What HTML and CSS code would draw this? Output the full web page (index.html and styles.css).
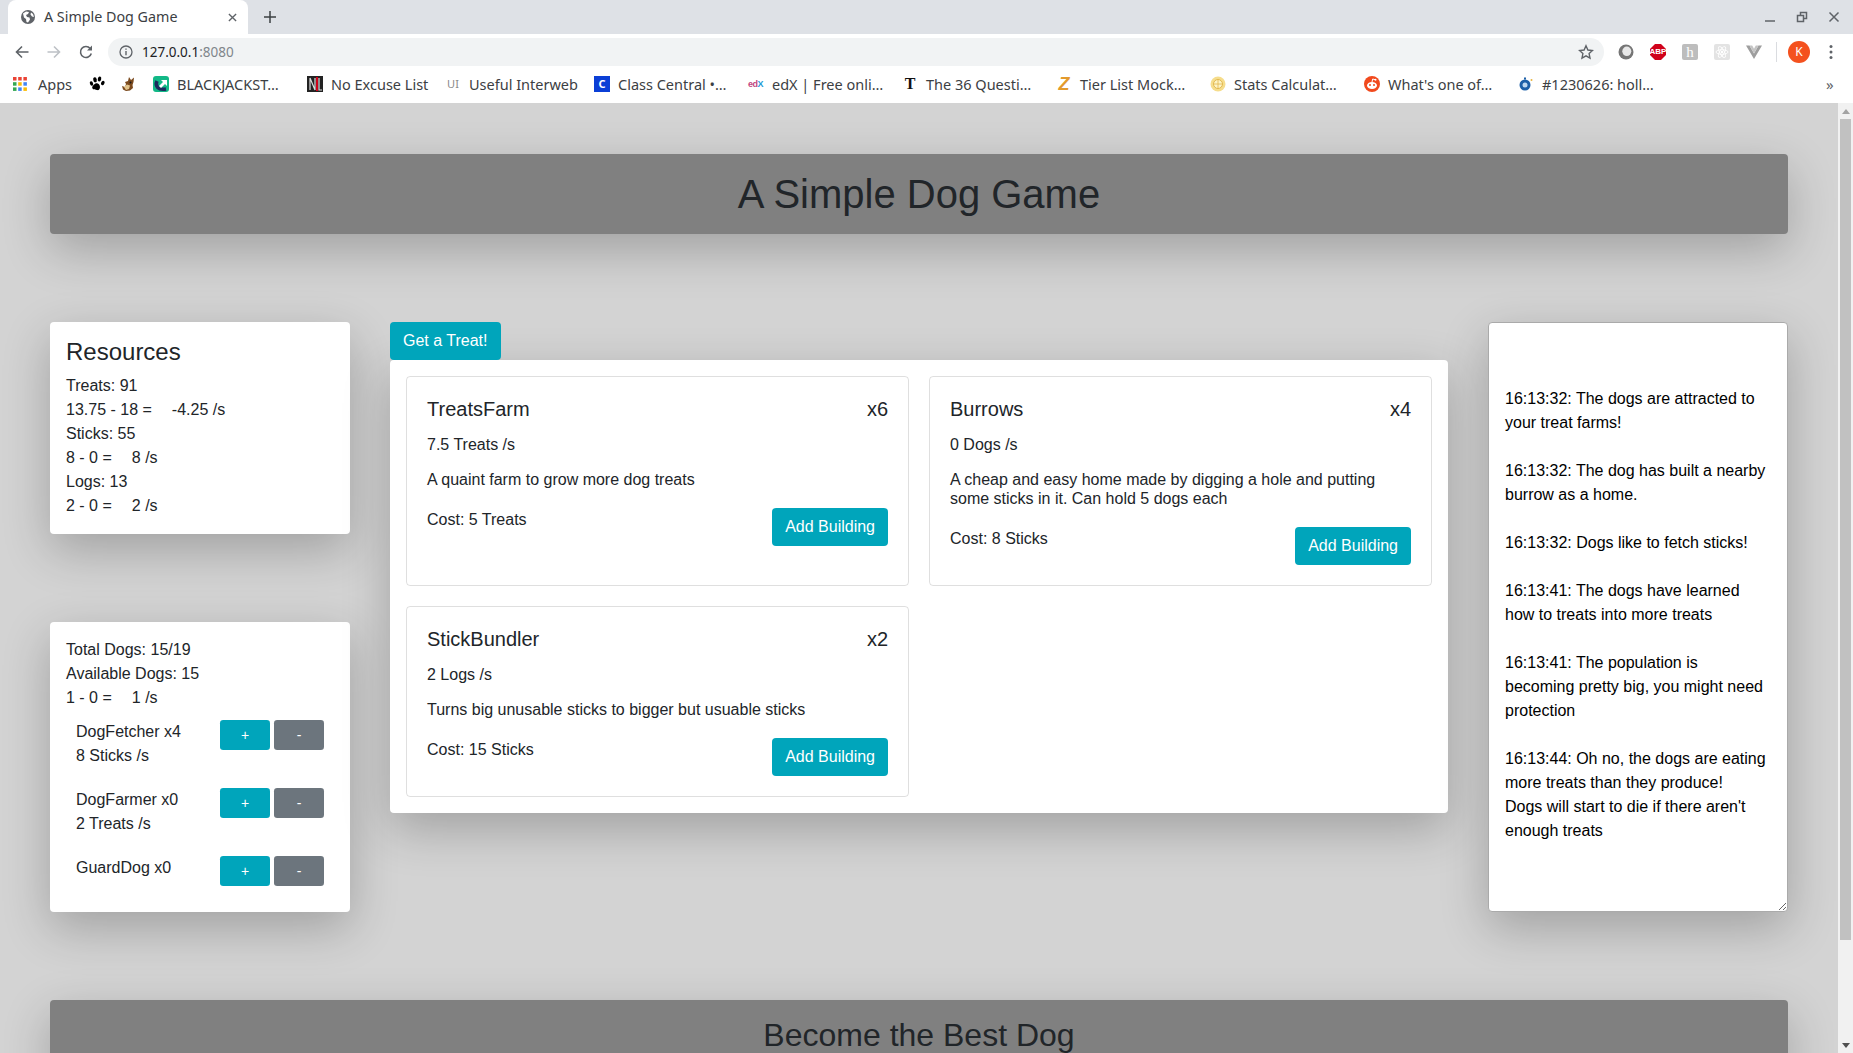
FILE: index.html

```html
<!DOCTYPE html>
<html lang="en">
<head>
    <meta charset="UTF-8">
    <title>A Simple Dog Game</title>
    <link rel="stylesheet" href="styles.css">
</head>
<body>
    <div class="tabstrip">
        <div class="tab">
            <svg class="icon16" viewBox="0 0 16 16"><circle cx="8" cy="8" r="7" fill="#5f6368"/><path d="M3 4.500l3-2 3 .5-1 2-2 1 1 2 2.500 .5 .5 2-2 3-1.500-.5-.5-3-2-1.500z M11 3.500l2 1.500 1 3-2-.5-1.500-2z" fill="#fff"/></svg>
            <span class="tab-title">A Simple Dog Game</span>
            <svg class="tab-close" viewBox="0 0 10 10"><path d="M1 1l8 8M9 1l-8 8" stroke="#5f6368" stroke-width="1.500"/></svg>
        </div>
        <svg class="new-tab" viewBox="0 0 12 12"><path d="M6 0v12M0 6h12" stroke="#3c4043" stroke-width="1.500"/></svg>
        <div class="window-btns">
            <svg class="icon16" viewBox="0 0 16 16"><path d="M3 12h10" stroke="#5f6368" stroke-width="1.500"/></svg>
            <svg class="icon16" viewBox="0 0 16 16"><path d="M3.500 6.500h6v6h-6z M6.500 6V3.500h6v6H10" fill="none" stroke="#5f6368" stroke-width="1.500"/></svg>
            <svg class="icon16" viewBox="0 0 16 16"><path d="M3.500 3.500l9 9M12.500 3.500l-9 9" stroke="#5f6368" stroke-width="1.500"/></svg>
        </div>
    </div>

    <div class="toolbar">
        <div class="nav-btn"><svg class="icon16" viewBox="0 0 16 16"><path d="M14.500 8H2.500M8 2.500L2.500 8 8 13.500" fill="none" stroke="#5f6368" stroke-width="1.600"/></svg></div>
        <div class="nav-btn"><svg class="icon16" viewBox="0 0 16 16"><path d="M1.500 8h12M8 2.500L13.500 8 8 13.500" fill="none" stroke="#bdc1c6" stroke-width="1.600"/></svg></div>
        <div class="nav-btn"><svg class="icon16" viewBox="0 0 16 16"><path d="M13.300 9.500A5.500 5.500 0 1 1 12.200 4.400" fill="none" stroke="#5f6368" stroke-width="1.600"/><path d="M14 1.500v5h-5z" fill="#5f6368"/></svg></div>
        <div class="omnibox">
            <svg class="icon14" viewBox="0 0 14 14"><circle cx="7" cy="7" r="6" fill="none" stroke="#5f6368" stroke-width="1.300"/><path d="M7 6v4.200M7 3.500v1.300" stroke="#5f6368" stroke-width="1.400"/></svg>
            <span class="url">127.0.0.1<span class="url-port">:8080</span></span>
            <svg class="star" viewBox="0 0 16 16"><path d="M8 1.800l1.900 4.200 4.600.5-3.400 3.100.9 4.500L8 11.800l-4 2.300.9-4.500L1.500 6.500l4.600-.5z" fill="none" stroke="#5f6368" stroke-width="1.400"/></svg>
        </div>
        <div class="nav-btn"><svg class="icon16" viewBox="0 0 16 16"><circle cx="8" cy="8" r="7.500" fill="#757575"/><ellipse cx="8.800" cy="7.300" rx="4.500" ry="4.800" fill="#e8e8e8"/></svg></div>
        <div class="nav-btn"><svg class="icon16" viewBox="0 0 16 16"><path d="M5 0h6l5 5v6l-5 5H5l-5-5V5z" fill="#d0021b"/></svg><span class="abp">ABP</span></div>
        <div class="nav-btn"><div class="ext-square"><span class="ext-h">h</span></div></div>
        <div class="nav-btn"><div class="ext-square ext-light"><svg class="icon14" viewBox="0 0 14 14"><g fill="none" stroke="#fff" stroke-width=".9"><ellipse cx="7" cy="7" rx="6" ry="2.300"/><ellipse cx="7" cy="7" rx="6" ry="2.300" transform="rotate(60 7 7)"/><ellipse cx="7" cy="7" rx="6" ry="2.300" transform="rotate(120 7 7)"/></g><circle cx="7" cy="7" r="1.200" fill="#fff"/></svg></div></div>
        <div class="nav-btn"><svg class="icon16" viewBox="0 0 16 16"><path d="M0 1.500h3.500L8 9.500l4.500-8H16L8 15z" fill="#9e9e9e"/><path d="M3.500 1.500h2.700L8 4.800l1.800-3.300h2.700L8 9.500z" fill="#c4c4c4"/></svg></div>
        <div class="toolbar-sep"></div>
        <div class="avatar">K</div>
        <svg class="dots" viewBox="0 0 4 16"><circle cx="2" cy="2.500" r="1.500" fill="#5f6368"/><circle cx="2" cy="8" r="1.500" fill="#5f6368"/><circle cx="2" cy="13.500" r="1.500" fill="#5f6368"/></svg>
    </div>

    <div class="bookmarks">
        <div class="bm bm-apps">
            <svg class="icon16" viewBox="0 0 16 16">
                <rect x="1" y="1" width="3.500" height="3.500" fill="#ea4335"/><rect x="6.200" y="1" width="3.500" height="3.500" fill="#ea4335"/><rect x="11.400" y="1" width="3.500" height="3.500" fill="#ea4335"/>
                <rect x="1" y="6.200" width="3.500" height="3.500" fill="#34a853"/><rect x="6.200" y="6.200" width="3.500" height="3.500" fill="#fbbc05"/><rect x="11.400" y="6.200" width="3.500" height="3.500" fill="#4285f4"/>
                <rect x="1" y="11.400" width="3.500" height="3.500" fill="#34a853"/><rect x="6.200" y="11.400" width="3.500" height="3.500" fill="#4285f4"/><rect x="11.400" y="11.400" width="3.500" height="3.500" fill="#fbbc05"/>
            </svg>
            <span>Apps</span>
        </div>
        <div class="bm bm-icon"><svg class="icon16" viewBox="0 0 16 16"><path d="M6.500 7.500c2-1 4.500 1 4.500 3.500 0 2.500-1.500 3.500-3 3-1.500-.5-3.500 0-4.500-1.500-1-1.500 1-4 3-5z"/><ellipse cx="2.500" cy="7.500" rx="1.600" ry="2.300" transform="rotate(-20 2.500 7.500)"/><ellipse cx="6" cy="3.800" rx="1.800" ry="2.600" transform="rotate(-10 6 3.800)"/><ellipse cx="10.500" cy="3" rx="1.700" ry="2.500" transform="rotate(15 10.500 3)"/><ellipse cx="13.800" cy="7" rx="1.600" ry="2.300" transform="rotate(25 13.800 7)"/></svg></div>
        <div class="bm bm-icon"><svg class="icon16" viewBox="0 0 16 16"><path d="M8 1l2 3 3-2.500-.5 4.500-1 3 .5 3-3 2.500-4 .5-3-1.500L1 10l3 1 1-3-1-2 3-1z" fill="#7b4a1e"/><path d="M3 11l3-2.500 3 1-1 3.500-3 1z" fill="#e3c48b"/><circle cx="9.500" cy="6.500" r="1" fill="#1a1a1a"/></svg></div>
        <div class="bm"><svg class="icon16" viewBox="0 0 16 16"><rect width="16" height="16" rx="3" fill="#12b886"/><path d="M4 5C1.800 10 5 14.500 13 13" fill="none" stroke="#1c2a5e" stroke-width="3.500"/><path d="M6 10l4-4-2-2h6v6l-2-2-4 4z" fill="#fff"/></svg><span>BLACKJACKST…</span></div>
        <div class="bm bm-nl"><svg class="icon16" viewBox="0 0 16 16"><rect width="16" height="16" fill="#222"/><path d="M3 14V2M3 2l5 12M8 2v12" stroke="#ddd" stroke-width="1.200" fill="none"/><path d="M10 1v14" stroke="#d0021b" stroke-width="2"/><path d="M12 2v12h3" stroke="#ddd" stroke-width="1.200" fill="none"/></svg><span>No Excuse List</span></div>
        <div class="bm bm-ui"><span class="ui-mark">UI</span><span>Useful Interweb</span></div>
        <div class="bm"><div class="cc-mark">C</div><span>Class Central •…</span></div>
        <div class="bm"><span class="edx-mark"><span class="edx-pink">ed</span><span class="edx-blue">X</span></span><span>edX | Free onli…</span></div>
        <div class="bm"><span class="nyt-mark">T</span><span>The 36 Questi…</span></div>
        <div class="bm"><span class="z-mark">Z</span><span>Tier List Mock…</span></div>
        <div class="bm"><svg class="icon16" viewBox="0 0 16 16"><circle cx="8" cy="8" r="7.500" fill="#f6dd8c"/><circle cx="8" cy="8" r="4.500" fill="#fdf3c6" stroke="#e2b84e" stroke-width="1"/><path d="M8 3.500v9M3.500 8h9" stroke="#e2b84e" stroke-width=".8"/></svg><span>Stats Calculat…</span></div>
        <div class="bm"><svg class="icon16" viewBox="0 0 16 16"><circle cx="8" cy="8" r="8" fill="#f1491d"/><ellipse cx="8" cy="9.500" rx="5" ry="3.500" fill="#fff"/><circle cx="6" cy="9" r="1" fill="#f1491d"/><circle cx="10" cy="9" r="1" fill="#f1491d"/><path d="M8 6l.7-3 2.300 .6" stroke="#fff" fill="none"/><circle cx="11.500" cy="3.800" r="1" fill="#fff"/></svg><span>What's one of…</span></div>
        <div class="bm"><svg class="icon16" viewBox="0 0 16 16"><path d="M7 1.500v2" stroke="#1b5fa8" stroke-width="2"/><circle cx="7" cy="9" r="5.500" fill="#1b5fa8"/><circle cx="7" cy="9" r="2.500" fill="#bcd7f0"/><circle cx="13.500" cy="4" r="1" fill="#e8b33c"/></svg><span>#1230626: holl…</span></div>
        <span class="bm-more">»</span>
    </div>

    <div class="viewport">
        <div class="page">
            <div class="banner">
                <h1>A Simple Dog Game</h1>
            </div>

            <div class="game">
                <div class="col-left">
                    <div class="panel">
                        <h4>Resources</h4>
                        <div>Treats: 91</div>
                        <div>13.75 - 18 =<span class="net">-4.25 /s</span></div>
                        <div>Sticks: 55</div>
                        <div>8 - 0 =<span class="net">8 /s</span></div>
                        <div>Logs: 13</div>
                        <div>2 - 0 =<span class="net">2 /s</span></div>
                    </div>

                    <div class="panel">
                        <div>Total Dogs: 15/19</div>
                        <div>Available Dogs: 15</div>
                        <div>1 - 0 =<span class="net">1 /s</span></div>
                        <div class="dog-list">
                            <div class="dog-row">
                                <div class="dog-info">
                                    <div>DogFetcher x4</div>
                                    <div>8 Sticks /s</div>
                                </div>
                                <button class="btn-small info">+</button>
                                <button class="btn-small secondary">-</button>
                            </div>
                            <div class="dog-row">
                                <div class="dog-info">
                                    <div>DogFarmer x0</div>
                                    <div>2 Treats /s</div>
                                </div>
                                <button class="btn-small info">+</button>
                                <button class="btn-small secondary">-</button>
                            </div>
                            <div class="dog-row">
                                <div class="dog-info">
                                    <div>GuardDog x0</div>
                                </div>
                                <button class="btn-small info">+</button>
                                <button class="btn-small secondary">-</button>
                            </div>
                        </div>
                    </div>
                </div>

                <div class="col-center">
                    <button class="btn treat-btn">Get a Treat!</button>
                    <div class="buildings">
                        <div class="building">
                            <div class="building-head"><span>TreatsFarm</span><span>x6</span></div>
                            <div class="building-rate">7.5 Treats /s</div>
                            <div class="building-desc">A quaint farm to grow more dog treats</div>
                            <div class="building-foot"><span>Cost: 5 Treats</span><button class="btn">Add Building</button></div>
                        </div>
                        <div class="building">
                            <div class="building-head"><span>Burrows</span><span>x4</span></div>
                            <div class="building-rate">0 Dogs /s</div>
                            <div class="building-desc">A cheap and easy home made by digging a hole and putting some sticks in it. Can hold 5 dogs each</div>
                            <div class="building-foot"><span>Cost: 8 Sticks</span><button class="btn">Add Building</button></div>
                        </div>
                        <div class="building">
                            <div class="building-head"><span>StickBundler</span><span>x2</span></div>
                            <div class="building-rate">2 Logs /s</div>
                            <div class="building-desc">Turns big unusable sticks to bigger but usuable sticks</div>
                            <div class="building-foot"><span>Cost: 15 Sticks</span><button class="btn">Add Building</button></div>
                        </div>
                    </div>
                </div>

                <textarea class="log" readonly>


16:13:32: The dogs are attracted to your treat farms!

16:13:32: The dog has built a nearby burrow as a home.

16:13:32: Dogs like to fetch sticks!

16:13:41: The dogs have learned how to treats into more treats

16:13:41: The population is becoming pretty big, you might need protection

16:13:44: Oh no, the dogs are eating more treats than they produce!
Dogs will start to die if there aren't enough treats</textarea>
            </div>

            <div class="banner">
                <h2>Become the Best Dog</h2>
            </div>
        </div>

        <div class="scrollbar">
            <div class="arrow-up"></div>
            <div class="thumb"></div>
            <div class="arrow-down"></div>
        </div>
    </div>
</body>
</html>
```

FILE: styles.css

```css
html, body {
    height: 100%;
}
body {
    margin: 0;
    height: 1053px;
    overflow: hidden;
    display: flex;
    flex-direction: column;
    font-family: "Liberation Sans", Arial, sans-serif;
    font-size: 16px;
    line-height: 24px;
    color: #212529;
    background-color: #d3d3d3;
}
.icon16 {
    width: 16px;
    height: 16px;
    flex: none;
}
.icon14 {
    width: 14px;
    height: 14px;
    flex: none;
}

/* browser chrome */
.tabstrip {
    height: 34px;
    flex: none;
    display: flex;
    align-items: center;
    padding-left: 8px;
    background-color: #dee1e6;
    font-family: "Noto Sans", sans-serif;
}
.tab {
    width: 240px;
    height: 34px;
    box-sizing: border-box;
    display: flex;
    align-items: center;
    padding: 0 11px 0 12px;
    background-color: #fff;
    border-radius: 8px 8px 0 0;
}
.tab-title {
    margin-left: 8px;
    flex: 1;
    font-size: 14.300px;
    color: #3c4043;
}
.tab-close {
    width: 9px;
    height: 9px;
}
.new-tab {
    width: 12px;
    height: 12px;
    margin-left: 16px;
}
.window-btns {
    margin-left: auto;
    display: flex;
    gap: 16px;
    padding-right: 11px;
}
.toolbar {
    height: 32px;
    flex: none;
    display: flex;
    align-items: center;
    padding-left: 6px;
    background-color: #fff;
    font-family: "Noto Sans", sans-serif;
}
.nav-btn {
    width: 32px;
    height: 28px;
    flex: none;
    display: flex;
    align-items: center;
    justify-content: center;
    position: relative;
}
.omnibox {
    width: 1496px;
    height: 28px;
    margin: 4px 6px 0 6px;
    flex: none;
    align-self: flex-start;
    display: flex;
    align-items: center;
    padding: 0 10px 0 11px;
    box-sizing: border-box;
    background-color: #f1f3f4;
    border-radius: 14px;
}
.toolbar .nav-btn {
    margin-top: 4px;
}
.url {
    margin-left: 9px;
    flex: 1;
    font-size: 13.500px;
    color: #202124;
}
.url-port {
    color: #80868b;
}
.star {
    width: 16px;
    height: 16px;
}
.abp {
    position: absolute;
    font-family: "Liberation Sans", sans-serif;
    font-size: 8px;
    font-weight: bold;
    color: #fff;
}
.ext-square {
    width: 16px;
    height: 16px;
    display: flex;
    align-items: center;
    justify-content: center;
    background-color: #bdbdbd;
    border-radius: 2px;
}
.ext-light {
    background-color: #e3e3e3;
}
.ext-h {
    font-family: "Liberation Serif", serif;
    font-size: 15px;
    line-height: 16px;
    color: #fff;
}
.toolbar-sep {
    width: 1px;
    height: 20px;
    margin: 4px 0 0 6px;
    background-color: #dadce0;
}
.avatar {
    width: 22px;
    height: 22px;
    margin: 4px 0 0 11px;
    border-radius: 50%;
    background-color: #f4511e;
    color: #fff;
    font-size: 12px;
    line-height: 22px;
    text-align: center;
}
.dots {
    width: 4px;
    height: 16px;
    margin: 4px 0 0 19px;
}
.bookmarks {
    height: 37px;
    flex: none;
    box-sizing: border-box;
    display: flex;
    align-items: center;
    padding: 0 0 1px 12px;
    background-color: #fff;
    font-family: "Noto Sans", sans-serif;
    font-size: 14.500px;
    color: #3c4043;
}
.bm {
    width: 154px;
    flex: none;
    display: flex;
    align-items: center;
    gap: 8px;
    white-space: nowrap;
}
.bm-apps {
    width: 77px;
    gap: 10px;
}
.bm-icon {
    width: 32px;
}
.bm-nl {
    width: 138px;
}
.bm-ui {
    width: 149px;
}
.ui-mark {
    width: 16px;
    font-size: 11px;
    color: #8a8a8a;
    text-align: center;
}
.cc-mark {
    width: 16px;
    height: 16px;
    background-color: #0b3fd6;
    color: #fff;
    font-size: 11px;
    font-weight: bold;
    line-height: 16px;
    text-align: center;
}
.edx-mark {
    width: 16px;
    font-family: "Liberation Sans", sans-serif;
    font-size: 9px;
    font-weight: bold;
    letter-spacing: -.5px;
}
.edx-pink {
    color: #c2457f;
}
.edx-blue {
    color: #1d9ad6;
}
.nyt-mark {
    width: 16px;
    font-family: "Liberation Serif", serif;
    font-size: 16px;
    font-weight: bold;
    color: #111;
    text-align: center;
}
.z-mark {
    width: 16px;
    font-family: "Liberation Sans", sans-serif;
    font-size: 18px;
    font-weight: bold;
    font-style: italic;
    color: #e39a2d;
    text-align: center;
}
.bm-more {
    margin-left: 154px;
    font-size: 15px;
    color: #5f6368;
}

/* page */
.viewport {
    flex: 1;
    display: flex;
    min-height: 0;
}
.page {
    flex: 1;
    min-width: 0;
    overflow: hidden;
    padding: 51px 50px 0 50px;
}
.banner {
    padding: 16px;
    background-color: #808080;
    border-radius: 4px;
    text-align: center;
    box-shadow: 0 16px 48px rgba(0, 0, 0, .24);
}
h1 {
    margin: 0;
    font-size: 40px;
    font-weight: 500;
    line-height: 48px;
}
h2 {
    margin: 0;
    font-size: 32px;
    font-weight: 500;
    line-height: 38.4px;
}
.game {
    display: flex;
    align-items: flex-start;
    margin: 88px 0;
}
.col-left {
    width: 300px;
    flex: none;
    display: flex;
    flex-direction: column;
    gap: 88px;
}
.panel {
    padding: 16px;
    background-color: #fff;
    border-radius: 4px;
    box-shadow: 0 16px 48px rgba(0, 0, 0, .24);
}
h4 {
    margin: 0 0 7.200px 0;
    font-size: 24px;
    font-weight: 500;
    line-height: 28.8px;
}
.net {
    margin-left: 20px;
}
.dog-list {
    display: flex;
    flex-direction: column;
    gap: 20px;
    margin-top: 10px;
    padding-bottom: 10px;
}
.dog-row {
    display: flex;
    align-items: flex-start;
    gap: 4px;
    padding: 0 10px;
}
.dog-info {
    flex: 1;
}
.btn-small {
    width: 50px;
    height: 30px;
    padding: 0;
    border: none;
    border-radius: 3.200px;
    font-family: inherit;
    font-size: 14px;
    color: #fff;
}
.info {
    background-color: #00a5bb;
}
.secondary {
    background-color: #6c757d;
}
.col-center {
    width: 1058px;
    flex: none;
    margin-left: 40px;
}
.btn {
    display: block;
    height: 38px;
    padding: 0 13px;
    border: none;
    border-radius: 4px;
    background-color: #00a5bb;
    font-family: inherit;
    font-size: 16px;
    color: #fff;
}
.treat-btn {
    position: relative;
    padding-right: 14px;
}
.buildings {
    display: grid;
    grid-template-columns: 1fr 1fr;
    gap: 20px;
    padding: 16px;
    background-color: #fff;
    border-radius: 4px;
    box-shadow: 0 16px 48px rgba(0, 0, 0, .24);
}
.building {
    padding: 20px;
    border: 1px solid rgba(0, 0, 0, .125);
    border-radius: 4px;
}
.building-head {
    display: flex;
    justify-content: space-between;
    margin-bottom: 12px;
    font-size: 20px;
}
.building-rate {
    margin-bottom: 12.600px;
}
.building-desc {
    margin-bottom: 19px;
    line-height: 19.200px;
}
.building-foot {
    display: flex;
    justify-content: space-between;
    align-items: flex-start;
}
.log {
    width: 300px;
    height: 590px;
    flex: none;
    box-sizing: border-box;
    margin: 0 0 0 40px;
    padding: 16px;
    border: 1px solid #aaa;
    border-radius: 4px;
    overflow: hidden;
    outline: none;
    font-family: inherit;
    font-size: 16px;
    line-height: 24px;
    color: #000;
    background-color: #fff;
    box-shadow: 0 16px 48px rgba(0, 0, 0, .24);
}

/* page scrollbar */
.scrollbar {
    width: 15px;
    flex: none;
    display: flex;
    flex-direction: column;
    align-items: center;
    background-color: #f1f1f1;
}
.arrow-up {
    margin-top: 6px;
    border: 4px solid transparent;
    border-top: none;
    border-bottom: 5px solid #a3a3a3;
}
.thumb {
    width: 11px;
    height: 821px;
    margin-top: 5px;
    background-color: #c1c1c1;
}
.arrow-down {
    margin-top: auto;
    margin-bottom: 5px;
    border: 4px solid transparent;
    border-bottom: none;
    border-top: 5px solid #505050;
}
```
